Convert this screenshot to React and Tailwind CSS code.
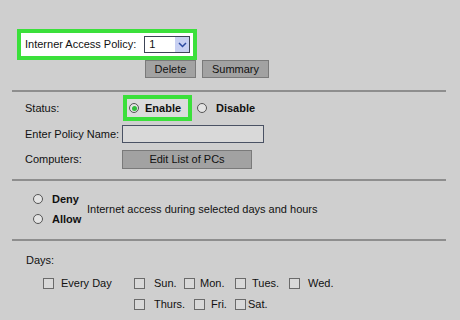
export default function App() {
  const Radio = ({ on }) => (
    <span className="w-[10px] h-[10px] rounded-full border border-[#555] bg-[#e4e4e4] flex items-center justify-center shrink-0">
      {on && <span className="w-[5px] h-[5px] rounded-full bg-[#2fbf3a]" />}
    </span>
  );
  const Box = () => (
    <span className="w-[11px] h-[11px] border border-[#6a6a6a] bg-[#d9d9d9] shrink-0" />
  );
  const Item = ({ w, gap, label }) => (
    <div className="flex items-center" style={{ width: w }}>
      <Box />
      <span style={{ marginLeft: gap }}>{label}</span>
    </div>
  );
  return (
    <div className="w-[460px] h-[320px] overflow-hidden bg-[#cfcfcf] text-[11px] leading-none text-[#111] font-['Liberation_Sans',Arial,sans-serif]">
      <div className="pt-[29px] pl-[17px]">
        <div className="w-[180px] h-[31px] border-[4px] border-[#3be03b] bg-white flex items-center pl-[4px]">
          <span>Interner Access Policy:</span>
          <div className="ml-[8px] w-[46px] h-[17px] border border-[#3c4456] bg-white flex items-center">
            <span className="pl-[4px] flex-1">1</span>
            <div className="w-[14px] h-[15px] bg-[#c8d0f2] flex items-center justify-center">
              <svg width="9" height="6" viewBox="0 0 9 6">
                <path d="M1 1 L4.5 4.5 L8 1" fill="none" stroke="#2c4aa0" strokeWidth="1.5" />
              </svg>
            </div>
          </div>
        </div>
      </div>
      <div className="flex ml-[145px] gap-[6px]">
        <div className="w-[51px] h-[18px] bg-[#a2a2a2] border border-[#7a7a7a] flex items-center justify-center">Delete</div>
        <div className="w-[67px] h-[18px] bg-[#a2a2a2] border border-[#7a7a7a] flex items-center justify-center">Summary</div>
      </div>
      <div className="mt-[12px] ml-[12px] w-[434px] h-[2px] bg-[#8e8e8e]" />

      <div className="mt-[3px] pl-[25px] flex items-center h-[26px]">
        <span className="w-[98px]">Status:</span>
        <div className="w-[69px] h-[26px] border-[4px] border-[#3be03b] bg-[#dcdcdc] flex items-center pl-[2px]">
          <Radio on />
          <span className="ml-[6px] font-bold">Enable</span>
        </div>
        <span className="ml-[5px]"><Radio /></span>
        <span className="ml-[9px] font-bold">Disable</span>
      </div>
      <div className="mt-[4px] pl-[25px] flex items-center h-[18px]">
        <span className="w-[97px]">Enter Policy Name:</span>
        <div className="w-[142px] h-[18px] border border-[#4a5264] bg-[#d9d9d9]" />
      </div>
      <div className="mt-[7px] pl-[25px] flex items-center h-[19px]">
        <span className="w-[97px]">Computers:</span>
        <div className="w-[130px] h-[19px] bg-[#a2a2a2] border border-[#7a7a7a] flex items-center justify-center">Edit List of PCs</div>
      </div>
      <div className="mt-[10px] ml-[12px] w-[434px] h-[2px] bg-[#8e8e8e]" />

      <div className="mt-[8px] pl-[33px] flex items-center">
        <div className="w-[54px] flex flex-col">
          <div className="h-[20px] flex items-center">
            <Radio />
            <span className="ml-[9px] font-bold">Deny</span>
          </div>
          <div className="h-[20px] flex items-center">
            <Radio />
            <span className="ml-[9px] font-bold">Allow</span>
          </div>
        </div>
        <span>Internet access during selected days and hours</span>
      </div>
      <div className="mt-[10px] ml-[12px] w-[434px] h-[2px] bg-[#8e8e8e]" />

      <div className="mt-[12px] pl-[26px] h-[14px] flex items-center">
        <span>Days:</span>
      </div>
      <div className="mt-[9px] pl-[43px] h-[14px] flex items-center">
        <Item w={91} gap={7} label="Every Day" />
        <Item w={50} gap={9} label="Sun." />
        <Item w={51} gap={5} label="Mon." />
        <Item w={54} gap={6} label="Tues." />
        <Item w={60} gap={8} label="Wed." />
      </div>
      <div className="mt-[7px] pl-[134px] h-[14px] flex items-center">
        <Item w={60} gap={9} label="Thurs." />
        <Item w={41} gap={6} label="Fri." />
        <Item w={50} gap={2} label="Sat." />
      </div>
    </div>
  );
}
